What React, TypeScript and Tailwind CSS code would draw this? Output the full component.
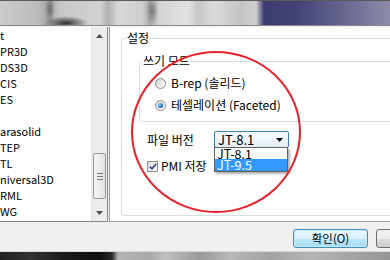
import type { ReactNode } from "react"

const listItems = ["t", "PR3D", "DS3D", "CIS", "ES", "", "arasolid", "TEP", "TL", "niversal3D", "RML", "WG"]

const topStrip =
  "bg-[image:radial-gradient(ellipse_22px_7px_at_66px_22px,#2e2e2e,#2e2e2e00),radial-gradient(ellipse_5px_14px_at_50px_8px,#6a6a6a,#6a6a6a00),radial-gradient(ellipse_6px_14px_at_152px_10px,#7a7a7a,#7a7a7a00),linear-gradient(to_right,#cbcbcb_0px,#bcbcbc_38px,#a4a4a4_48px,#c6c6c6_60px,#d2d2d2_100px,#b0b0b0_108px,#d8d8d8_118px,#d0d0d0_142px,#a9a9a9_150px,#d4d4d4_160px,#e2e2e2_188px,#c8c8c8_198px,#dcdcdc_214px,#c4c4c4_240px,#d0d0d0_256px,#3b3b6f_264px,#44447a_300px,#8c8ca8_390px)]"

const bottomStrip =
  "bg-[linear-gradient(to_right,#222_0px,#333_30px,#1c1c1c_60px,#101010_100px,#2a2a2a_112px,#b4b4b4_118px,#a9a9a9_150px,#c0c0c0_165px,#9a9a9a_200px,#b8b8b8_230px,#a2a2a2_270px,#b5b5b5_310px,#959595_390px)]"

function Radio({ checked }: { checked?: boolean }) {
  return (
    <span className="flex h-[11px] w-[11px] shrink-0 items-center justify-center rounded-full border border-[#8f8f8f] bg-[linear-gradient(135deg,#d2d2d2,#ffffff)]">
      {checked && (
        <span className="h-[5px] w-[5px] rounded-full bg-[radial-gradient(circle_at_35%_35%,#8fd8ff,#1f6ab8_60%,#0c3a74)]" />
      )}
    </span>
  )
}

function GroupLegend({ children, className }: { children: ReactNode; className: string }) {
  return <legend className={`px-[1px] text-[12px] leading-[14px] ${className}`}>{children}</legend>
}

export default function App() {
  return (
    <div
      className="relative flex h-[260px] w-[390px] flex-col overflow-hidden bg-[#f0f0f0] text-black"
      style={{ fontFamily: '"Noto Sans CJK KR", "Noto Sans", sans-serif' }}
    >
      {/* blurred window behind */}
      <div className={`h-[25px] shrink-0 border-t border-[#5a5a5a] ${topStrip}`} />
      <div className="h-[1px] shrink-0 bg-[#8a8a8a]" />
      <div className="h-[1px] shrink-0 bg-[#f0f0f0]" />

      <div className="flex h-[195px] shrink-0">
        {/* format list */}
        <div className="flex w-[108px] shrink-0 border-r border-b border-[#828790] bg-white">
          <div className="flex-1 overflow-hidden">
            {listItems.map((item, i) => (
              <div key={i} className="h-[16px] whitespace-nowrap text-[11px] leading-[16px]">
                {item}
              </div>
            ))}
          </div>
          <div className="flex w-[16px] flex-col border-l border-[#e6e6e6] bg-[#ececec]">
            <div className="flex h-[17px] items-center justify-center">
              <svg width="7" height="4" viewBox="0 0 7 4">
                <path d="M0 4L3.5 0L7 4Z" fill="#4d4d4d" />
              </svg>
            </div>
            <div className="flex-1 px-[1px]">
              <div className="mt-[109px] flex h-[46px] flex-col items-center justify-center gap-[2px] rounded-[2px] border border-[#9a9a9a] bg-[linear-gradient(to_right,#f4f4f4,#e2e2e2)]">
                <span className="h-[1px] w-[6px] bg-[#7a7a7a]" />
                <span className="h-[1px] w-[6px] bg-[#7a7a7a]" />
                <span className="h-[1px] w-[6px] bg-[#7a7a7a]" />
              </div>
            </div>
            <div className="flex h-[17px] items-center justify-center">
              <svg width="7" height="4" viewBox="0 0 7 4">
                <path d="M0 0L3.5 4L7 0Z" fill="#4d4d4d" />
              </svg>
            </div>
          </div>
        </div>

        {/* settings panel */}
        <div className="ml-[1px] flex-1 overflow-hidden border-l border-b border-[#9c9c9c] bg-white pt-[4px] pl-[11px]">
          <fieldset className="h-[185px] w-[300px] rounded-[3px] border border-[#d5dfe5]">
            <GroupLegend className="ml-[4px]">설정</GroupLegend>

            <fieldset className="mt-[9px] ml-[17px] h-[68px] w-[260px] rounded-[3px] border border-[#d5dfe5]">
              <GroupLegend className="ml-[2px]">쓰기 모드</GroupLegend>
              <div className="mt-[7px] flex h-[16px] items-center gap-[5px] pl-[15px] text-[12px]">
                <Radio />
                <span>B-rep (솔리드)</span>
              </div>
              <div className="mt-[6px] flex h-[16px] items-center gap-[5px] pl-[15px] text-[12px]">
                <Radio checked />
                <span>테셀레이션 (Faceted)</span>
              </div>
            </fieldset>

            <div className="mt-[9px] flex h-[17px] items-center pl-[25px]">
              <span className="w-[67px] text-[12px]">파일 버전</span>
              <div className="relative">
                <div className="flex h-[17px] w-[75px] items-center justify-between rounded-[2px] border border-[#3c7fb1] bg-[linear-gradient(#fbfdff,#e2edf6)] pr-[5px] pl-[3px] text-[13px] leading-[13px]">
                  <span>JT-8.1</span>
                  <svg width="7" height="4" viewBox="0 0 7 4">
                    <path d="M0 0L3.5 4L7 0Z" fill="#000" />
                  </svg>
                </div>
                <div className="absolute top-[16px] left-0 w-[74px] border border-[#646464] bg-white text-[12.5px] shadow-[2px_2px_2px_rgba(0,0,0,0.3)]">
                  <div className="h-[11px] pl-[2px] leading-[11px]">JT-8.1</div>
                  <div className="h-[12px] bg-[#3399ff] pl-[2px] leading-[12px] text-white">JT-9.5</div>
                </div>
              </div>
            </div>

            <div className="mt-[10px] flex h-[16px] items-center gap-[3px] pl-[25px] text-[12px]">
              <span className="flex h-[11px] w-[11px] items-center justify-center border border-[#8f8f8f] bg-[linear-gradient(135deg,#dcdcdc,#ffffff)]">
                <svg width="8" height="7" viewBox="0 0 8 7">
                  <path d="M0.8 3.6L3 5.8L7.2 0.8" fill="none" stroke="#31478f" strokeWidth="1.6" />
                </svg>
              </span>
              <span>PMI 저장</span>
            </div>
          </fieldset>
        </div>
      </div>

      {/* dialog buttons */}
      <div className="-mr-[61px] flex h-[29px] shrink-0 justify-end gap-[8px] pt-[7px]">
        <button className="h-[19px] w-[75px] rounded-[3px] border border-[#3c8fc8] bg-[linear-gradient(#eaf6fd_0%,#d9f0fc_50%,#bee6fd_50%,#a7d9f5_100%)] text-[11.5px] leading-none shadow-[inset_0_0_0_1px_#c8ecff]">
          확인(O)
        </button>
        <button
          aria-label="취소"
          className="h-[19px] w-[75px] rounded-[3px] border border-[#707070] bg-[linear-gradient(#f2f2f2_0%,#ebebeb_50%,#dddddd_50%,#cfcfcf_100%)]"
        />
      </div>
      <div className="h-[1px] shrink-0 bg-[#d8d8d8]" />
      <div className={`h-[8px] shrink-0 ${bottomStrip}`} />

      {/* red annotation circle */}
      <svg className="pointer-events-none absolute top-0 left-0" width="390" height="260">
        <ellipse cx="216" cy="132" rx="84" ry="80" fill="none" stroke="#e8202a" strokeWidth="2" />
      </svg>
    </div>
  )
}
